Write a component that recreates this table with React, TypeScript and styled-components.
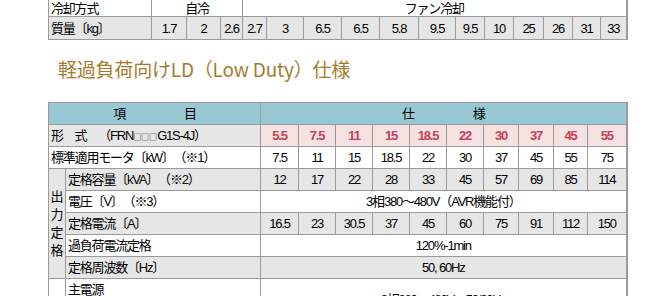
import React from "react";
import styled, { createGlobalStyle } from "styled-components";

const Global = createGlobalStyle`
  html, body { margin: 0; padding: 0; background: #fff; overflow: hidden; }
  body {
    font-family: "Liberation Sans", "Noto Sans CJK JP", sans-serif;
    color: #000;
    text-spacing-trim: space-all;
  }
`;

const Page = styled.div`
  padding-left: 48px;
  width: 580px;
`;

const Table = styled.table<{ $first?: boolean }>`
  border-collapse: collapse;
  table-layout: fixed;
  width: 578px;
  margin-top: ${(p) => (p.$first ? "-1px" : "0")};
  border-right: 2px solid #9a9a9a;
  font-size: 13px;
  letter-spacing: -1.2px;
`;

const Cell = styled.td<{ $bg?: string; $align?: string; $h?: number }>`
  border: 1px solid #9a9a9a;
  padding: 0 2px;
  height: ${(p) => p.$h ?? 21}px;
  line-height: 15px;
  background: ${(p) => p.$bg ?? "#fff"};
  text-align: ${(p) => p.$align ?? "center"};
  white-space: nowrap;
  overflow: hidden;
`;

const TwoLineCell = styled(Cell)`
  line-height: 18px;
  padding-top: 2px;
  padding-bottom: 2px;
  vertical-align: top;
`;

const HeadCell = styled.th`
  border: 1px solid #9a9a9a;
  padding: 0;
  height: 21px;
  background: #97c8d4;
  font-weight: normal;
  text-align: center;
  line-height: 15px;
  white-space: pre;
`;

const PinkCell = styled(Cell)`
  background: #f6e3e1;
  color: #c9405a;
  font-weight: bold;
`;

const VerticalCell = styled.td<{ $bg?: string }>`
  border: 1px solid #9a9a9a;
  padding: 0 1px;
  background: ${(p) => p.$bg ?? "#fff"};
  text-align: center;
  line-height: 18px;
  white-space: normal;
  word-break: break-all;
  letter-spacing: 0;
`;

const Squares = styled.span`
  font-size: 8px;
  letter-spacing: 0;
  font-family: "Noto Sans CJK JP", sans-serif;
`;

const Heading = styled.h2`
  margin: 17px 0 21px 10px;
  font-family: "Noto Sans CJK JP", "Liberation Sans", sans-serif;
  font-size: 19px;
  font-weight: 400;
  line-height: 24px;
  color: #a57b2d;
  letter-spacing: -0.2px;
`;

const GRAY = "#e6e6e6";

const topCols = [103, 35, 34, 22, 24, 37, 38, 38, 39, 37, 29, 29, 30, 29, 28, 26];
const mass = ["1.7", "2", "2.6", "2.7", "3", "6.5", "6.5", "5.8", "9.5", "9.5", "10", "25", "26", "31", "33"];

const ldCols = [17, 195, 38, 37, 37, 37, 37, 37, 35, 35, 34, 39];
const types = ["5.5", "7.5", "11", "15", "18.5", "22", "30", "37", "45", "55"];
const motor = ["7.5", "11", "15", "18.5", "22", "30", "37", "45", "55", "75"];
const kva = ["12", "17", "22", "28", "33", "45", "57", "69", "85", "114"];
const amps = ["16.5", "23", "30.5", "37", "45", "60", "75", "91", "112", "150"];

export default function App() {
  return (
    <>
      <Global />
      <Page>
        <Table $first>
          <colgroup>
            {topCols.map((w, i) => (
              <col key={i} style={{ width: w }} />
            ))}
          </colgroup>
          <tbody>
            <tr>
              <Cell $align="left" $h={16}>冷却方式</Cell>
              <Cell colSpan={3} $h={16}>自冷</Cell>
              <Cell colSpan={12} $h={16}>ファン冷却</Cell>
            </tr>
            <tr>
              <Cell $align="left" $bg={GRAY} $h={22}>質量〔kg〕</Cell>
              {mass.map((m, i) => (
                <Cell key={i} $bg={GRAY} $h={22}>{m}</Cell>
              ))}
            </tr>
          </tbody>
        </Table>

        <Heading>軽過負荷向けLD（Low Duty）仕様</Heading>

        <Table>
          <colgroup>
            {ldCols.map((w, i) => (
              <col key={i} style={{ width: w }} />
            ))}
          </colgroup>
          <tbody>
            <tr>
              <HeadCell colSpan={2}>{"項　　　　　目"}</HeadCell>
              <HeadCell colSpan={10}>{"仕　　　　　様"}</HeadCell>
            </tr>
            <tr>
              <Cell colSpan={2} $align="left" $bg={GRAY}>
                形　式　（FRN<Squares>□□□</Squares>G1S-4J）
              </Cell>
              {types.map((t, i) => (
                <PinkCell key={i}>{t}</PinkCell>
              ))}
            </tr>
            <tr>
              <Cell colSpan={2} $align="left">標準適用モータ〔kW〕（※1）</Cell>
              {motor.map((t, i) => (
                <Cell key={i}>{t}</Cell>
              ))}
            </tr>
            <tr>
              <VerticalCell rowSpan={5} $bg={GRAY}>出力定格</VerticalCell>
              <Cell $align="left" $bg={GRAY}>定格容量〔kVA〕（※2）</Cell>
              {kva.map((t, i) => (
                <Cell key={i} $bg={GRAY}>{t}</Cell>
              ))}
            </tr>
            <tr>
              <Cell $align="left">電圧〔V〕（※3）</Cell>
              <Cell colSpan={10}>3相380～480V（AVR機能付）</Cell>
            </tr>
            <tr>
              <Cell $align="left" $bg={GRAY}>定格電流〔A〕</Cell>
              {amps.map((t, i) => (
                <Cell key={i} $bg={GRAY}>{t}</Cell>
              ))}
            </tr>
            <tr>
              <Cell $align="left">過負荷電流定格</Cell>
              <Cell colSpan={10}>120%-1min</Cell>
            </tr>
            <tr>
              <Cell $align="left" $bg={GRAY}>定格周波数〔Hz〕</Cell>
              <Cell colSpan={10} $bg={GRAY}>50, 60Hz</Cell>
            </tr>
            <tr>
              <VerticalCell rowSpan={5}>入力電源</VerticalCell>
              <TwoLineCell $align="left">
                主電源
                <br />
                相数、電圧、周波数
              </TwoLineCell>
              <Cell colSpan={10}>3相380～480V，50/60Hz</Cell>
            </tr>
            <tr>
              <Cell $align="left">制御電源補助入力</Cell>
              <Cell colSpan={10}>単相380～480V，50/60Hz</Cell>
            </tr>
            <tr>
              <Cell $align="left">ファン電源</Cell>
              <Cell colSpan={10}>単相380～480V，50/60Hz</Cell>
            </tr>
            <tr>
              <Cell $align="left">電圧、周波数許容変動</Cell>
              <Cell colSpan={10}>電圧：+10～-15%，周波数：+5～-5%</Cell>
            </tr>
            <tr>
              <Cell $align="left">瞬時電圧低下耐量</Cell>
              <Cell colSpan={10}>310V以上で運転継続</Cell>
            </tr>
          </tbody>
        </Table>
      </Page>
    </>
  );
}
